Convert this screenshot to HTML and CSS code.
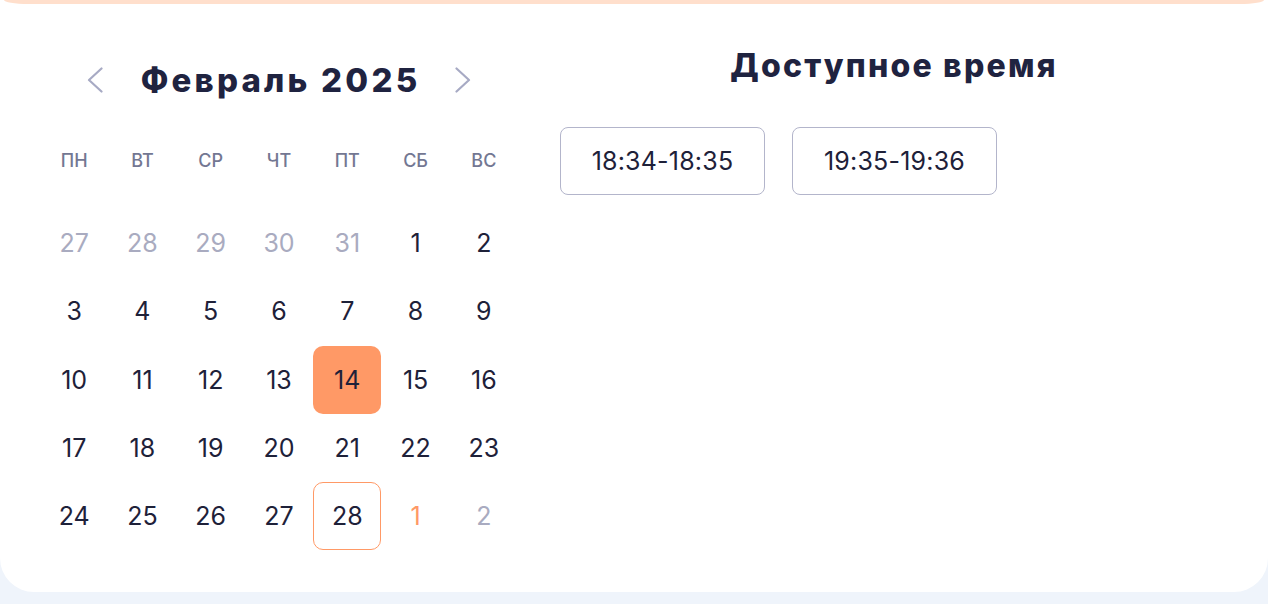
FILE: index.html
```html
<!DOCTYPE html>
<html lang="ru">
<head>
<meta charset="utf-8">
<link rel="stylesheet" href="styles.css">
</head>
<body>
<div class="card">
  <div class="promo-edge"></div>
  <div class="card-body">
    <section class="calendar">
      <div class="cal-header">
        <button class="nav" aria-label="prev">
          <svg width="16" height="26" viewBox="0 0 16 26"><path d="M14.5 1.5 L2 13 L14.5 24.5" fill="none" stroke="#a7aac4" stroke-width="2.2" stroke-linecap="round" stroke-linejoin="round"/></svg>
        </button>
        <h2 class="month">Февраль 2025</h2>
        <button class="nav" aria-label="next">
          <svg width="16" height="26" viewBox="0 0 16 26"><path d="M1.5 1.5 L14 13 L1.5 24.5" fill="none" stroke="#a7aac4" stroke-width="2.2" stroke-linecap="round" stroke-linejoin="round"/></svg>
        </button>
      </div>
      <div class="weekdays">
        <span>ПН</span><span>ВТ</span><span>СР</span><span>ЧТ</span><span>ПТ</span><span>СБ</span><span>ВС</span>
      </div>
      <div class="days">
        <span class="day muted">27</span><span class="day muted">28</span><span class="day muted">29</span><span class="day muted">30</span><span class="day muted">31</span><span class="day">1</span><span class="day">2</span>
        <span class="day">3</span><span class="day">4</span><span class="day">5</span><span class="day">6</span><span class="day">7</span><span class="day">8</span><span class="day">9</span>
        <span class="day">10</span><span class="day">11</span><span class="day">12</span><span class="day">13</span><span class="day selected">14</span><span class="day">15</span><span class="day">16</span>
        <span class="day">17</span><span class="day">18</span><span class="day">19</span><span class="day">20</span><span class="day">21</span><span class="day">22</span><span class="day">23</span>
        <span class="day">24</span><span class="day">25</span><span class="day">26</span><span class="day">27</span><span class="day today">28</span><span class="day accent">1</span><span class="day muted">2</span>
      </div>
    </section>
    <section class="times">
      <h2 class="times-title">Доступное время</h2>
      <div class="slots">
        <button class="slot">18:34-18:35</button>
        <button class="slot">19:35-19:36</button>
      </div>
    </section>
  </div>
</div>
</body>
</html>
```
FILE: styles.css
```css
* { box-sizing: border-box; }
html, body { margin: 0; padding: 0; }
body {
  width: 1268px;
  height: 604px;
  overflow: hidden;
  background: #eff4fb;
  font-family: Inter, "Noto Sans", sans-serif;
  color: #1e2139;
}
.card {
  background: #fff;
  border-radius: 0 0 34px 34px;
  height: 592px;
}
.promo-edge {
  height: 4px;
  margin: 0 4px;
  background: #ffdfcc;
  border-radius: 0 0 24px 24px / 0 0 4px 4px;
}
.card-body {
  display: flex;
  gap: 42px;
  padding: 42px 40px 0 40px;
}
.calendar {
  width: 478px;
  flex: none;
}
.cal-header {
  display: flex;
  align-items: center;
  justify-content: center;
  gap: 38px;
  height: 48px;
  margin-top: 10px;
}
.nav {
  background: none;
  border: 0;
  padding: 0;
  display: flex;
  cursor: pointer;
}
.month {
  margin: 0 -3px 0 0;
  font-size: 33px;
  line-height: 40px;
  font-weight: 800;
  letter-spacing: 3.2px;
  color: #1f2340;
}
.weekdays {
  display: grid;
  grid-template-columns: repeat(7, 1fr);
  height: 40px;
  margin-top: 36px;
  align-items: center;
  text-align: center;
  font-size: 18px;
  font-weight: 500;
  color: #737792;
}
.days {
  display: grid;
  grid-template-columns: repeat(7, 1fr);
  grid-auto-rows: 68.3px;
  margin-top: 29px;
}
.day {
  display: flex;
  align-items: center;
  justify-content: center;
  font-size: 25px;
  font-weight: 400;
  color: #1e2139;
  border-radius: 10px;
}
.day.muted { color: #a9abc0; }
.day.accent { color: #ff9966; }
.day.selected { background: #ff9966; }
.day.today { border: 1px solid #ff9966; }
.times {
  flex: 1;
  display: flex;
  flex-direction: column;
}
.times-title {
  margin: 0;
  text-align: center;
  font-size: 32px;
  line-height: 40px;
  font-weight: 800;
  letter-spacing: 2.2px;
  color: #1f2340;
}
.slots {
  display: flex;
  gap: 27px;
  margin-top: 41px;
}
.slot {
  width: 205px;
  height: 68px;
  background: #fff;
  border: 1px solid #b3b5cb;
  border-radius: 8px;
  font-family: Inter, "Noto Sans", sans-serif;
  font-size: 25px;
  font-weight: 400;
  letter-spacing: 0.2px;
  color: #1e2139;
  padding: 0;
}
```
